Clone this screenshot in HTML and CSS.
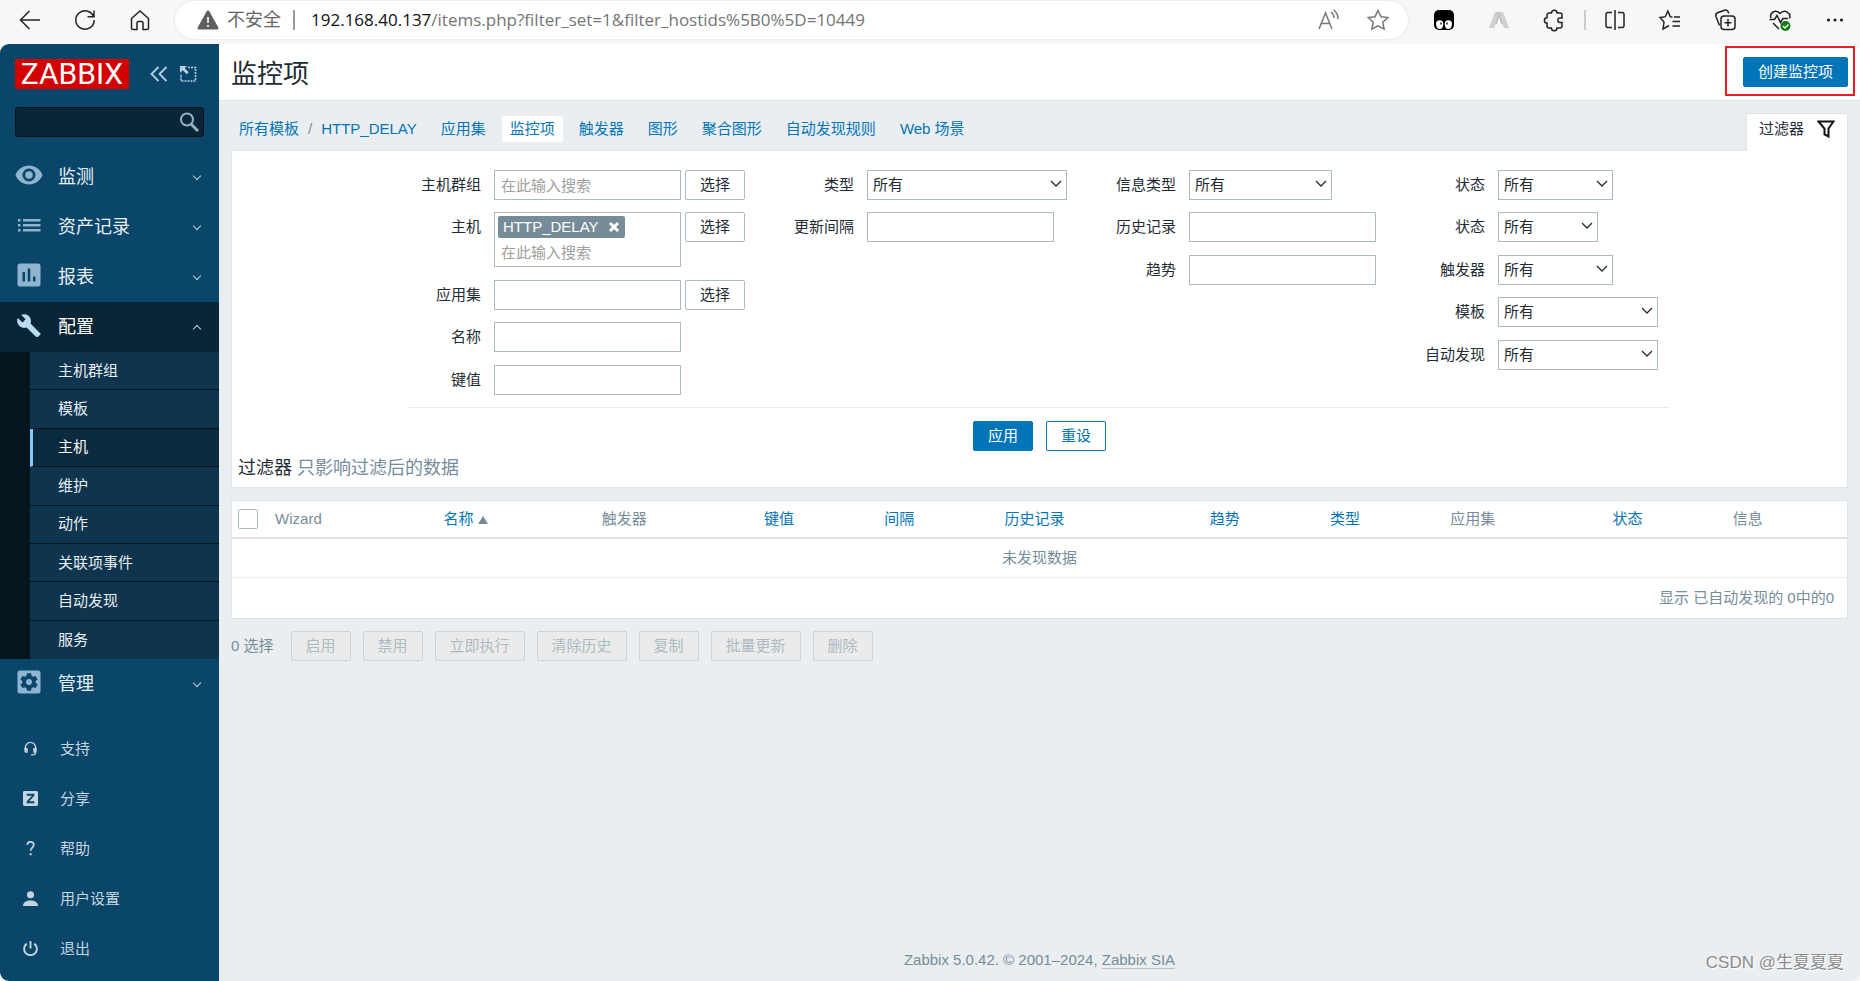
FILE: index.html
```html
<!DOCTYPE html>
<html lang="zh-CN">
<head>
<meta charset="utf-8">
<title>监控项</title>
<link rel="stylesheet" href="styles.css">
</head>
<body>
<div class="browser-bar">
  <div class="nav-buttons">
    <button class="tool" aria-label="返回"><svg viewBox="0 0 24 24"><path d="M22 12H2.500M11.500 3L2.500 12l9 9"/></svg></button>
    <button class="tool" aria-label="刷新"><svg viewBox="0 0 24 24"><path d="M20.500 8.500A9.200 9.200 0 1 0 21.200 12M21 2.500v6.200h-6.500"/></svg></button>
    <button class="tool" aria-label="主页"><svg viewBox="0 0 24 24"><path d="M3.500 10.500L12 3l8.500 7.500V20a1.500 1.500 0 0 1-1.500 1.500h-4V15a1.500 1.500 0 0 0-1.500-1.500h-3A1.500 1.500 0 0 0 9 15v6.500H5A1.500 1.500 0 0 1 3.500 20z"/></svg></button>
  </div>
  <div class="address">
    <svg class="warn" viewBox="0 0 22 20"><path d="M11 .5c.7 0 1.200.3 1.500.9l8.800 16c.6 1.100-.1 2.100-1.300 2.100H2c-1.200 0-1.900-1-1.300-2.100l8.800-16c.3-.6.8-.9 1.500-.9z" fill="#5f5f5f"/><path d="M11 7v6M11 15v2" stroke="#fff" stroke-width="1.600"/></svg>
    <span class="insecure">不安全</span>
    <span class="address-sep"></span>
    <span class="url"><b>192.168.40.137</b>/items.php?filter_set=1&amp;filter_hostids%5B0%5D=10449</span>
    <button class="tool muted" aria-label="朗读"><svg viewBox="0 0 24 24"><path d="M2 21L8.500 5 15 21M4.300 15.500h8.400M14 4c2 1.500 3 3.500 3 6M16.500 2c3 2 4.500 5 4.500 9"/></svg></button>
    <button class="tool muted" aria-label="收藏"><svg viewBox="0 0 24 24"><path d="M12 2.500l3 6.200 6.800.9-5 4.700 1.300 6.800L12 17.800l-6.100 3.300 1.300-6.800-5-4.700 6.800-.9z"/></svg></button>
  </div>
  <div class="tool-group">
    <button class="tool" aria-label="扩展一"><svg viewBox="0 0 24 24"><rect x="2" y="2" width="20" height="20" rx="5" fill="#000" stroke="none"/><path d="M4 16a3.600 3.600 0 0 1 7.300 0c0 3-1.500 5-3.300 5-2.300 0-4-2-4-5zM12.700 16a3.600 3.600 0 0 1 7.300 0c0 3-1.700 5-4 5-1.800 0-3.300-2-3.300-5z" fill="#fff" stroke="none"/><path d="M9 14.500v2M15 14.500v2"/></svg></button>
    <button class="tool" aria-label="扩展二"><svg viewBox="0 0 24 24"><path d="M8 4h3v6L7 20H2zM13 4h3l6 16h-5l-4-10z" fill="#d0d0d0" stroke="none"/><path d="M11 4v6L9 16M13 4v6l2 6" stroke="#bbb"/></svg></button>
    <button class="tool" aria-label="扩展"><svg viewBox="0 0 24 24"><path d="M6.500 5H9.500a2.800 2.800 0 0 1 5.600 0H18a2 2 0 0 1 2 2v3h-2a2.200 2.200 0 0 0 0 4.400h2V18a2 2 0 0 1-2 2h-3a2.800 2.800 0 0 1-5.600 0H7a2 2 0 0 1-2-2v-3a2.600 2.600 0 0 1 0-5.200V7a2 2 0 0 1 1.500-2z"/></svg></button>
  </div>
  <span class="bar-sep"></span>
  <div class="tool-group">
    <button class="tool" aria-label="分屏"><svg viewBox="0 0 24 24"><path d="M9 4.500H5A2 2 0 0 0 3 6.500v11a2 2 0 0 0 2 2h4M15 4.500h4a2 2 0 0 1 2 2v11a2 2 0 0 1-2 2h-4M12 2v20"/></svg></button>
    <button class="tool" aria-label="收藏夹"><svg viewBox="0 0 24 24"><path d="M14.500 9L12.300 8.700 9.800 3 7.300 8.700 2 9.600l4 4.400-1 7 6-3.500M16 9h6M14.500 13.500H22M14.500 18H22"/></svg></button>
    <button class="tool" aria-label="集锦"><svg viewBox="0 0 24 24"><rect x="8" y="8" width="14" height="13.500" rx="3"/><path d="M15 11v7.500M11.500 14.800h7M6.500 17.500L3 8.500C2.300 6.500 3 5.500 4.500 4.800L11.500 2.300c2-.7 3.200.2 3.700 1.700l.5 1.500"/></svg></button>
    <button class="tool" aria-label="性能"><svg viewBox="0 0 24 24"><path d="M3 10C1 5 7.500.5 12 5.500 16.500.5 23.500 5 21.500 10.500M1.500 11.500h5l2.500-4 3.500 7 2.500-4h5M5 15l6 6"/><circle cx="17.500" cy="18" r="5" fill="#107c10" stroke="none"/><path d="M15 18l2 2 3.500-3.500" stroke="#fff"/></svg></button>
    <button class="tool" aria-label="更多"><svg viewBox="0 0 24 24"><g fill="#222" stroke="none"><circle cx="5.500" cy="12" r="1.600"/><circle cx="12" cy="12" r="1.600"/><circle cx="18.500" cy="12" r="1.600"/></g></svg></button>
  </div>
</div>

<div class="page">
  <aside class="sidebar">
    <div class="sidebar-head">
      <a class="logo" href="#">ZABBIX</a>
      <button class="head-btn" aria-label="收起侧边栏"><svg viewBox="0 0 18 16"><path d="M8.500 1l-7 7 7 7M16.500 1l-7 7 7 7" stroke-width="1.800"/></svg></button>
      <button class="head-btn" aria-label="隐藏侧边栏"><svg viewBox="0 0 18 16"><path d="M8 1.500h7.500v13.500H1V8" stroke-dasharray="2 1" stroke-width="1.600"/><path d="M0 0h7L4.800 2.200l4 4-2 2-4-4L0 7z" fill="#b5cfe0" stroke="none"/></svg></button>
    </div>
    <form class="search">
      <input type="text" aria-label="搜索">
      <button type="button" aria-label="搜索"><svg viewBox="0 0 20 20"><circle cx="8" cy="7.500" r="6"/><path d="M12 12l7 7" stroke-width="3"/></svg></button>
    </form>
    <nav class="menu">
      <a class="menu-item" href="#"><svg viewBox="0 0 28 24"><path fill-rule="evenodd" d="M14 2.500c6 0 11.200 3.600 13.600 9.500C25.200 17.900 20 21.500 14 21.500S2.800 17.900.4 12C2.800 6.100 8 2.500 14 2.500zm0 3a6.500 6.500 0 1 0 0 13 6.500 6.500 0 0 0 0-13zm0 2.700a3.800 3.800 0 1 1 0 7.600 3.800 3.800 0 0 1 0-7.600z"/></svg><span>监测</span><i class="chev"></i></a>
      <a class="menu-item" href="#"><svg viewBox="0 0 28 24"><path d="M3 6h2.500v2.500H3zM3 11h2.500v2.500H3zM3 16h2.500v2.500H3zM8 6h17.500v2.500H8zM8 11h17.500v2.500H8zM8 16h17.500v2.500H8z"/></svg><span>资产记录</span><i class="chev"></i></a>
      <a class="menu-item" href="#"><svg viewBox="0 0 28 24"><path fill-rule="evenodd" d="M5 .5h18a2.500 2.500 0 0 1 2.500 2.500v18a2.500 2.500 0 0 1-2.500 2.500H5A2.500 2.500 0 0 1 2.500 21V3A2.500 2.500 0 0 1 5 .5zM7.500 9v9.500H10V9zm5.200-3.500v13h2.600v-13zM18 13.500v5h2.500v-5z"/></svg><span>报表</span><i class="chev"></i></a>
      <a class="menu-item active" href="#"><svg viewBox="0 0 28 24"><path d="M25.200 20.300L15.500 10.600c1-2.500.4-5.400-1.600-7.400C11.800 1.100 8.600.7 6.100 1.800l4.500 4.500-3.100 3.100L2.800 5C1.600 7.500 2.100 10.700 4.200 12.800c2 2 4.900 2.600 7.400 1.600l9.700 9.700c.4.400 1.100.4 1.500 0l2.400-2.400c.5-.4.500-1.100 0-1.400z"/></svg><span>配置</span><i class="chev up"></i></a>
      <div class="submenu">
        <a href="#">主机群组</a>
        <a href="#">模板</a>
        <a class="selected" href="#">主机</a>
        <a href="#">维护</a>
        <a href="#">动作</a>
        <a href="#">关联项事件</a>
        <a href="#">自动发现</a>
        <a href="#">服务</a>
      </div>
      <a class="menu-item" href="#"><svg viewBox="0 0 28 24"><path fill-rule="evenodd" d="M5 .5h18a2.500 2.500 0 0 1 2.500 2.500v18a2.500 2.500 0 0 1-2.500 2.500H5A2.500 2.500 0 0 1 2.500 21V3A2.500 2.500 0 0 1 5 .5zM12 3.300l-.5 2.500-1.700 1-2.400-.9-2 3.500 1.900 1.600v2l-1.900 1.600 2 3.500 2.400-.9 1.700 1 .5 2.500h4l.5-2.500 1.700-1 2.400.9 2-3.500-1.900-1.600v-2l1.900-1.600-2-3.500-2.400.9-1.700-1-.5-2.500zM14 9a3 3 0 1 1 0 6 3 3 0 0 1 0-6z"/></svg><span>管理</span><i class="chev"></i></a>
    </nav>
    <nav class="user-menu">
      <a href="#"><svg viewBox="0 0 16 16"><path d="M2.500 9V7a5.500 5.500 0 0 1 11 0v5.500c0 1.500-1 2-2.500 2.300H8.500" fill="none" stroke="#c5d5e0" stroke-width="1.500"/><path d="M1.500 7.500H5v5H3A1.500 1.500 0 0 1 1.500 11zM11 7.500h3.500V11l-1.500 1.500h-2z"/></svg>支持</a>
      <a href="#"><svg viewBox="0 0 16 16"><path fill-rule="evenodd" d="M1.500 0h13A1.500 1.500 0 0 1 16 1.500v13a1.500 1.500 0 0 1-1.500 1.500h-13A1.500 1.500 0 0 1 0 14.500v-13A1.500 1.500 0 0 1 1.500 0zM4 3v2h5.500L4 11v2h8v-2H6.700L12 5V3z"/></svg>分享</a>
      <a href="#"><svg viewBox="0 0 16 16"><path d="M4.500 4C4.800 2 6 .9 8 .9c2.100 0 3.500 1.200 3.500 3 0 3-3.400 3.200-3.400 6.600" fill="none" stroke="#c5d5e0" stroke-width="1.900"/><path d="M7 13h2.200v2.300H7z"/></svg>帮助</a>
      <a href="#"><svg viewBox="0 0 16 16"><circle cx="8" cy="4" r="3.800"/><path d="M0 16c0-4 4-5.800 8-5.800s8 1.800 8 5.800z"/></svg>用户设置</a>
      <a href="#"><svg viewBox="0 0 16 16"><path d="M4 2.800a6.800 6.800 0 1 0 8 0M8 0v8" fill="none" stroke="#c5d5e0" stroke-width="2"/></svg>退出</a>
    </nav>
  </aside>

  <main class="content">
    <header class="title-bar">
      <h1>监控项</h1>
      <div class="highlight"><button class="btn primary">创建监控项</button></div>
    </header>
    <div class="body">
      <div class="tabs-row">
        <nav class="crumbs">
          <span class="path"><a href="#">所有模板</a><em>/</em><a href="#">HTTP_DELAY</a></span>
          <a href="#">应用集</a>
          <a class="current" href="#">监控项</a>
          <a href="#">触发器</a>
          <a href="#">图形</a>
          <a href="#">聚合图形</a>
          <a href="#">自动发现规则</a>
          <a href="#">Web 场景</a>
        </nav>
        <button class="filter-tab">过滤器<svg viewBox="0 0 18 18"><path d="M1.500 1.500h15l-5 7v8l-4-2v-6z"/></svg></button>
      </div>

      <section class="filter">
        <form class="filter-form">
          <div class="fields">
            <div class="col">
              <div class="row"><label for="groups">主机群组</label><div class="ctl"><input id="groups" class="text" type="text" placeholder="在此输入搜索"><button type="button" class="btn plain">选择</button></div></div>
              <div class="row"><label for="hosts">主机</label><div class="ctl"><div class="multi"><span class="tag">HTTP_DELAY<button type="button" aria-label="移除"><svg viewBox="0 0 12 12"><path d="M2 2l8 8M10 2l-8 8"/></svg></button></span><input id="hosts" type="text" placeholder="在此输入搜索"></div><button type="button" class="btn plain">选择</button></div></div>
              <div class="row"><label for="app">应用集</label><div class="ctl"><input id="app" class="text" type="text"><button type="button" class="btn plain">选择</button></div></div>
              <div class="row"><label for="name">名称</label><div class="ctl"><input id="name" class="text" type="text"></div></div>
              <div class="row"><label for="key">键值</label><div class="ctl"><input id="key" class="text" type="text"></div></div>
            </div>
            <div class="col">
              <div class="row"><label for="type">类型</label><select id="type" class="w200"><option>所有</option></select></div>
              <div class="row"><label for="delay">更新间隔</label><input id="delay" class="text" type="text"></div>
            </div>
            <div class="col">
              <div class="row"><label for="vtype">信息类型</label><select id="vtype" class="w143"><option>所有</option></select></div>
              <div class="row"><label for="history">历史记录</label><input id="history" class="text" type="text"></div>
              <div class="row"><label for="trends">趋势</label><input id="trends" class="text" type="text"></div>
            </div>
            <div class="col">
              <div class="row"><label for="state">状态</label><select id="state" class="w115"><option>所有</option></select></div>
              <div class="row"><label for="status">状态</label><select id="status" class="w100"><option>所有</option></select></div>
              <div class="row"><label for="trig">触发器</label><select id="trig" class="w115"><option>所有</option></select></div>
              <div class="row"><label for="tpl">模板</label><select id="tpl" class="w160"><option>所有</option></select></div>
              <div class="row"><label for="disc">自动发现</label><select id="disc" class="w160"><option>所有</option></select></div>
            </div>
          </div>
          <div class="filter-buttons"><button type="button" class="btn primary">应用</button><button type="button" class="btn outline">重设</button></div>
        </form>
        <p class="subfilter"><strong>过滤器</strong> 只影响过滤后的数据</p>
      </section>

      <table class="items">
        <colgroup><col class="c37"><col class="c168"><col class="c158"><col class="c162"><col class="c120"><col class="c120"><col class="c205"><col class="c120"><col class="c120"><col class="c162"><col class="c120"><col class="c120"></colgroup>
        <thead>
          <tr>
            <th><input type="checkbox" aria-label="全选"></th>
            <th>Wizard</th>
            <th><a href="#">名称<i class="sort"></i></a></th>
            <th>触发器</th>
            <th><a href="#">键值</a></th>
            <th><a href="#">间隔</a></th>
            <th><a href="#">历史记录</a></th>
            <th><a href="#">趋势</a></th>
            <th><a href="#">类型</a></th>
            <th>应用集</th>
            <th><a href="#">状态</a></th>
            <th>信息</th>
          </tr>
        </thead>
        <tbody><tr><td colspan="12" class="empty">未发现数据</td></tr></tbody>
        <tfoot><tr><td colspan="12" class="stats">显示 已自动发现的 0中的0</td></tr></tfoot>
      </table>

      <div class="actions">
        <span>0 选择</span>
        <button class="btn" disabled>启用</button>
        <button class="btn" disabled>禁用</button>
        <button class="btn" disabled>立即执行</button>
        <button class="btn" disabled>清除历史</button>
        <button class="btn" disabled>复制</button>
        <button class="btn" disabled>批量更新</button>
        <button class="btn" disabled>删除</button>
      </div>
    </div>
    <footer class="footer">Zabbix 5.0.42. © 2001–2024, <a href="#">Zabbix SIA</a></footer>
    <span class="watermark">CSDN @生夏夏夏</span>
  </main>
</div>
</body>
</html>
```
FILE: styles.css
```css
* { box-sizing: border-box; }
body {
  margin: 0;
  min-height: 100vh;
  display: flex;
  flex-direction: column;
  background: #f7f7f7;
  color: #1f2c33;
  font: 15px/20px "Liberation Sans", "Noto Sans CJK SC", sans-serif;
}
a { color: #0275b8; text-decoration: none; }
button, input, select { font: inherit; color: inherit; margin: 0; }
button { padding: 0; border: 0; background: none; }
svg { display: block; flex: none; fill: none; }

/* browser toolbar */
.browser-bar { display: flex; align-items: center; height: 44px; padding: 0 13px 4px 18px; }
.nav-buttons, .tool-group { display: flex; gap: 31px; }
.tool { width: 24px; height: 24px; stroke: #222; stroke-width: 1.500; }
.tool svg { width: 24px; height: 24px; }
.muted { stroke: #777; }
.address {
  flex: 1;
  display: flex;
  align-items: center;
  height: 38px;
  margin: 0 24px 0 23px;
  padding: 0 18px 0 22px;
  border-radius: 19px;
  background: #fff;
  box-shadow: 0 0 3px #ddd;
}
.warn { width: 22px; height: 20px; }
.insecure { margin-left: 8px; font-size: 18px; color: #666; }
.address-sep { width: 2px; height: 20px; margin: 0 16px 0 12px; background: #999; }
.url { flex: 1; font: 17px/24px "Open Sans", sans-serif; color: #757575; }
.url b { font-weight: 400; color: #111; }
.address .tool + .tool { margin-left: 25px; }
.bar-sep { width: 2px; height: 20px; margin: 0 17px 0 18px; background: #ccc; }

.page { flex: 1; display: flex; border-radius: 9px; overflow: hidden; background: #ebeef0; }

/* sidebar */
.sidebar { width: 219px; flex: none; background: #0a466a; }
.sidebar-head { display: flex; align-items: center; padding: 15px 15px 0; }
.logo {
  width: 114px;
  margin-right: 21px;
  background: #d40000;
  color: #fff;
  font-family: Roboto, sans-serif;
  font-size: 30px;
  line-height: 30px;
  text-align: center;
}
.head-btn { stroke: #b5cfe0; }
.head-btn + .head-btn { margin-left: 12px; }
.head-btn svg { width: 18px; height: 16px; }
.search {
  display: flex;
  align-items: center;
  height: 30px;
  margin: 18px 15px 15px;
  padding: 0 4px;
  border: 1px solid #04121a;
  border-radius: 3px;
  background: #0a2636;
}
.search input { flex: 1; min-width: 0; border: 0; background: none; color: #fff; }
.search svg { width: 20px; height: 20px; stroke: #8fb0c7; stroke-width: 2; }
.menu-item {
  display: flex;
  align-items: center;
  height: 50px;
  padding: 0 17px 0 15px;
  color: #e8eff4;
  font-size: 18px;
}
.menu-item svg { width: 28px; height: 24px; margin: -4px 15px 0 0; fill: #8fb4d0; }
.menu-item span { flex: 1; }
.menu-item.active { background: #0a2636; color: #fff; }
.menu-item.active svg { fill: #b9daf0; }
.chev { width: 6px; height: 6px; margin: 0 2px 2px 0; border: solid #b9cfde; border-width: 0 1px 1px 0; transform: rotate(45deg); }
.chev.up { margin: 4px 2px 0 0; transform: rotate(225deg); }
.submenu {
  display: grid;
  grid-auto-rows: 1fr;
  min-height: 307px;
  border-left: 30px solid #04151e;
  background: #0f344d;
}
.submenu a { display: flex; align-items: center; padding-left: 28px; border-bottom: 1px solid #04151e; color: #e8eff4; }
.submenu a:last-child { border-bottom: 0; }
.submenu .selected { padding-left: 25px; border-left: 3px solid #85c8f5; background: #0b2a3e; color: #fff; }
.user-menu { padding: 15px 0 7px; }
.user-menu a { display: flex; align-items: center; height: 50px; padding-left: 23px; color: #c5d5e0; }
.user-menu svg { width: 15px; height: 15px; margin: -2px 22px 0 0; fill: #c5d5e0; }

/* content */
.content { flex: 1; min-width: 0; display: flex; flex-direction: column; position: relative; }
.title-bar {
  display: flex;
  align-items: flex-start;
  justify-content: space-between;
  padding: 2px 5px 4px 12px;
  border-bottom: 1px solid #dfe4e7;
  background: #fff;
}
h1 { margin: 10px 0 0; font-size: 26px; line-height: 36px; font-weight: 400; }
.highlight { padding: 9px 5px 7px 16px; border: 2px solid #ed1c24; }
.btn {
  height: 30px;
  padding: 0 14px;
  border: 1px solid #acbbc2;
  border-radius: 2px;
  background: #fff;
  line-height: 28px;
}
.btn.primary { border-color: #0275b8; background: #0275b8; color: #fff; }
.btn.outline { border-color: #0275b8; color: #0275b8; }
.btn:disabled { border-color: #ccd5d9; background: #ebebeb; color: #acbbc2; }

.body { padding: 12px 12px 0; }
.tabs-row { display: flex; justify-content: space-between; }
.crumbs { display: flex; align-items: center; gap: 8px; height: 26px; margin-top: 3px; }
.crumbs > * { padding: 0 8px; line-height: 26px; }
.crumbs em { margin: 0 9px; font-style: normal; color: #768d99; }
.crumbs .current { background: #fff; border-radius: 2px; }
.filter-tab {
  display: flex;
  align-items: center;
  gap: 13px;
  height: 38px;
  margin-bottom: -1px;
  padding: 0 12px 8px;
  border: 1px solid #dfe4e7;
  border-bottom: 0;
  background: #fff;
  position: relative;
}
.filter-tab svg { width: 18px; height: 18px; stroke: #111; stroke-width: 2; }
.filter { border: 1px solid #dfe4e7; background: #fff; }
.filter-form { width: fit-content; margin: 0 auto; }
.fields { display: flex; gap: 49px; padding: 19px 12px 12px; border-bottom: 1px solid #ebebeb; }
.row { display: flex; gap: 13px; margin-top: 12px; }
.row:nth-child(odd) { margin-top: 13px; }
.row:first-child { margin-top: 0; }
.row label { flex: 1; min-width: 60px; text-align: right; line-height: 30px; }
.ctl { width: 251px; display: flex; gap: 4px; align-items: flex-start; }
.text, select { height: 30px; border: 1px solid #acbbc2; border-radius: 0; background: #fff; }
.text { width: 187px; padding: 0 6px; }
.col .row > .text { flex: none; }
::placeholder { color: #a0a0a0; opacity: 1; }
.ctl .btn { width: 60px; }
.multi { width: 187px; border: 1px solid #acbbc2; padding: 3px 3px 1px; }
.multi input { display: block; width: 100%; height: 25px; margin-top: 2px; padding: 0 3px; border: 0; }
.tag {
  display: flex;
  align-items: center;
  gap: 9px;
  width: fit-content;
  height: 22px;
  padding: 0 5px;
  border-radius: 2px;
  background: #768d99;
  color: #fff;
}
.tag svg { width: 12px; height: 12px; stroke: #fff; stroke-width: 3; }
select {
  appearance: none;
  padding: 0 20px 0 5px;
  background: #fff url("data:image/svg+xml,%3Csvg xmlns='http://www.w3.org/2000/svg' width='12' height='8'%3E%3Cpath d='M1 1l5 5 5-5' fill='none' stroke='%231f2c33' stroke-width='1.300'/%3E%3C/svg%3E") no-repeat right 4px top 9px;
}
.col select { flex: none; }
.w200 { width: 200px; }
.w143 { width: 143px; margin-right: 44px; }
.w115 { width: 115px; margin-right: 45px; }
.w100 { width: 100px; margin-right: 60px; }
.w160 { width: 160px; }
.col:nth-child(2) .text { margin-right: 13px; }
.filter-buttons { display: flex; justify-content: center; gap: 13px; padding: 13px 0 0; }
.subfilter { margin: 4px 6px 6px; font-size: 18px; line-height: 26px; color: #768d99; }
.subfilter strong { font-weight: 400; color: #1f2c33; }

.items {
  width: 100%;
  margin-top: 12px;
  table-layout: fixed;
  border-collapse: separate;
  border-spacing: 0;
  border: 1px solid #dfe4e7;
  background: #fff;
  color: #768d99;
}
.c37 { width: 37px; }
.c120 { width: 120px; }
.c158 { width: 158px; }
.c162 { width: 162px; }
.c168 { width: 168px; }
.c205 { width: 205px; }
th, td { padding: 0 6px; }
th { height: 38px; border-bottom: 2px solid #dfe4e7; text-align: left; font-weight: 400; }
th input {
  display: block;
  appearance: none;
  width: 20px;
  height: 20px;
  border: 1px solid #acbbc2;
  border-radius: 2px;
}
.sort { display: inline-block; margin-left: 5px; border: solid transparent; border-width: 0 5px 8px; border-bottom-color: #768d99; }
.empty { height: 39px; border-bottom: 1px solid #ebeef0; text-align: center; }
.stats { height: 40px; padding-right: 13px; text-align: right; }
.actions { display: flex; align-items: center; gap: 12px; margin-top: 12px; color: #768d99; }
.actions span { margin-right: 5px; }
.footer { margin-top: auto; padding: 0 0 11px; text-align: center; color: #768d99; }
.footer a { color: inherit; border-bottom: 1px solid #b5c1c8; }
.watermark { position: absolute; right: 16px; bottom: 7px; font-size: 17px; line-height: 22px; color: #8b8b8b; text-shadow: 1px 1px 0 #fff; }
```
